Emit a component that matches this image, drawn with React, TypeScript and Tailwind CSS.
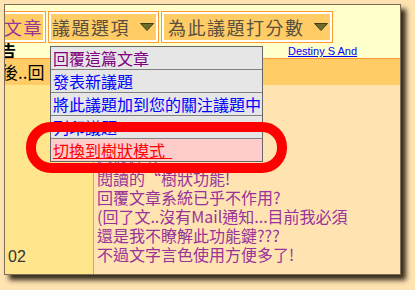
import React from "react";

const cjk = "font-['Noto_Sans_CJK_TC','Noto_Sans',sans-serif]";

const Arrow = () => (
  <svg width="14" height="8" viewBox="0 0 14 8" className="shrink-0">
    <path d="M0.5 0.5 H13.5 L7 7.5 Z" fill="#6b6b2a" stroke="#3d3d18" strokeWidth="1" />
  </svg>
);

const Tab = ({ className, children }: { className: string; children: React.ReactNode }) => (
  <div className={`h-[32px] shrink-0 border border-[#ff9933] bg-white p-[2px] ${className}`}>
    <div className="flex h-full items-center bg-[#ffcc66]">{children}</div>
  </div>
);

const menuItems = [
  { label: "回覆這篇文章", color: "text-[#800080]" },
  { label: "發表新議題", color: "text-[#0000ff]" },
  { label: "將此議題加到您的關注議題中", color: "text-[#0000ff]" },
  { label: "列印議題", color: "text-[#0000ff]" },
];

const lines = [
  "樹狀模式",
  "閱讀的\u201c樹狀功能!",
  "回覆文章系統已乎不作用?",
  "(回了文..沒有Mail通知...目前我必須",
  "還是我不瞭解此功能鍵???",
  "不過文字言色使用方便多了!",
];

export default function App() {
  return (
    <div className={`relative h-[290px] w-[415px] overflow-hidden bg-[#ffe4b2] pl-[4px] pt-[4px] ${cjk}`}>
      <div className="relative h-[271px] w-[397px] overflow-hidden border border-[#7d6e55] bg-[#ffe4b2] shadow-[5px_5px_5px_rgba(30,20,10,0.9)]">
        {/* header */}
        <div className="h-[53px] bg-[#ffffcc] pt-[6px]">
          <div className="flex gap-[2px]">
            <Tab className="-ml-[19px] w-[60px]">
              <span className="ml-auto text-[18px] tracking-[1.5px] text-[#993399]">文章</span>
            </Tab>
            <Tab className="w-[111px]">
              <span className="pl-[1px] text-[18px] tracking-[1.5px] text-[#5a5040]">議題選項</span>
              <span className="ml-auto mr-[2px]">
                <Arrow />
              </span>
            </Tab>
            <Tab className="w-[172px]">
              <span className="pl-[4px] text-[18px] tracking-[1.5px] text-[#5a5040]">為此議題打分數</span>
              <span className="ml-auto mr-[2px]">
                <Arrow />
              </span>
            </Tab>
          </div>
          <div className="flex h-[15px] items-end">
            <div className="w-[283px] overflow-hidden">
              <span className="-ml-[5px] block text-[16px] font-bold leading-[15px] text-black">告</span>
            </div>
            <a className="font-['Liberation_Sans',sans-serif] text-[11px] leading-[13px] text-[#0000ff] underline">
              Destiny S And
            </a>
          </div>
        </div>
        <div className="h-px bg-[#ff9933]" />
        <div className="h-[26px] overflow-hidden bg-[#ffcc66] pt-[3px]">
          <span className="-ml-[4px] block text-[17px] leading-[20px] text-black">後..回</span>
        </div>

        {/* body */}
        <div className="flex h-[190px]">
          <div className="flex w-[89px] shrink-0 flex-col justify-end border-r border-[#ff9933] bg-[#ffe68c] pb-[10px] pl-[3px]">
            <span className="font-['Liberation_Sans',sans-serif] text-[16px] leading-[16px] text-[#333]">02</span>
          </div>
          <div className="flex-1 whitespace-nowrap pl-[3px] pt-[65px] text-[16px] leading-[19px] text-[#993399]">
            {lines.map((l) => (
              <div key={l}>{l}</div>
            ))}
          </div>
        </div>

        {/* dropdown menu */}
        <div className="absolute left-[45px] top-[41px] w-[213px] border border-[#666] bg-[#e6e6e6]">
          {menuItems.map((m, i) => (
            <div
              key={m.label}
              className={`flex h-[22px] items-center pl-[2px] text-[16px] ${m.color} ${i > 0 ? "h-[23px] border-t border-[#808080]" : ""}`}
            >
              {m.label}
            </div>
          ))}
          <div className="flex h-[23px] items-center border-t border-[#808080] bg-[#ffcccc] pl-[2px] text-[16px] text-[#ff0000]">
            <span className="underline">切換到樹狀模式&nbsp;&nbsp;</span>
          </div>
        </div>
      </div>

      {/* highlight ring */}
      <div className="absolute left-[26px] top-[122px] h-[51px] w-[261px] rounded-[25px] border-[10px] border-[#ff0000]" />
    </div>
  );
}
